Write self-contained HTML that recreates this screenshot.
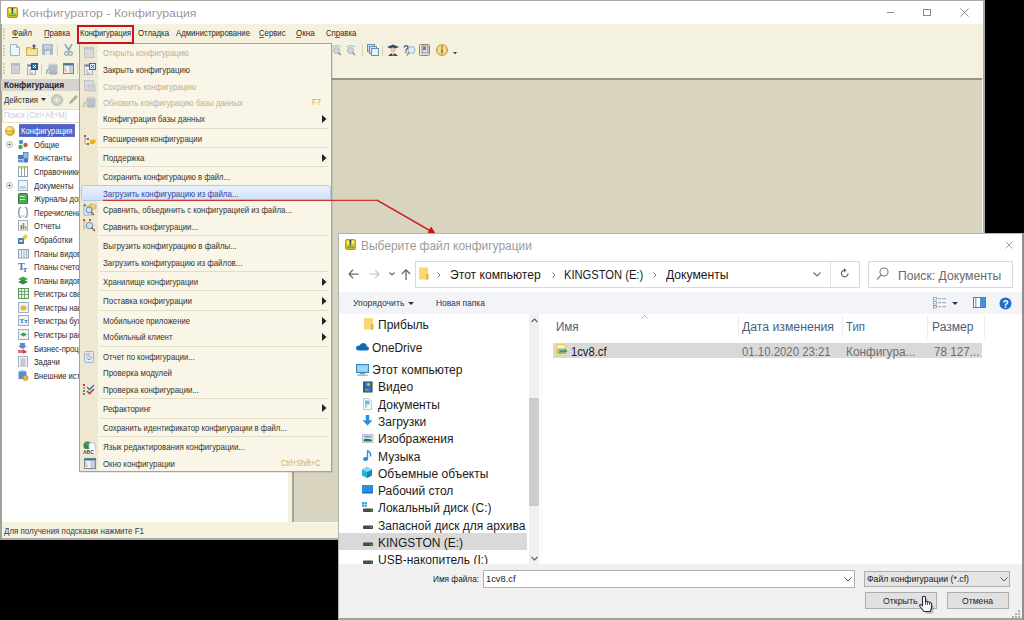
<!DOCTYPE html>
<html><head><meta charset="utf-8"><style>
html,body{margin:0;padding:0;}
body{width:1024px;height:620px;position:relative;overflow:hidden;background:#000;font-family:"Liberation Sans",sans-serif;}
#w{position:absolute;left:0;top:0;width:1024px;height:620px;}
.a{position:absolute;}
.t{position:absolute;white-space:nowrap;line-height:1;transform-origin:0 0;}
svg{position:absolute;}

#t0{transform:scaleX(1.0807)}
#t1{transform:scaleX(0.8477)}
#t2{transform:scaleX(0.8019)}
#t3{transform:scaleX(0.7920)}
#t4{transform:scaleX(0.8175)}
#t5{transform:scaleX(0.8089)}
#t6{transform:scaleX(0.8065)}
#t7{transform:scaleX(0.8342)}
#t8{transform:scaleX(0.8050)}
#t9{transform:scaleX(0.9189)}
#t10{transform:scaleX(0.8621)}
#t11{transform:scaleX(0.8295)}
#t12{transform:scaleX(0.8831)}
#t13{transform:scaleX(0.8526)}
#t32{transform:scaleX(0.8155)}
#t33{transform:scaleX(0.8308)}
#t34{transform:scaleX(0.8055)}
#t35{transform:scaleX(0.8160)}
#t36{transform:scaleX(0.8177)}
#t37{transform:scaleX(0.8132)}
#t38{transform:scaleX(0.8290)}
#t39{transform:scaleX(0.8035)}
#t40{transform:scaleX(0.8253)}
#t41{transform:scaleX(0.8144)}
#t42{transform:scaleX(0.8142)}
#t43{transform:scaleX(0.8190)}
#t44{transform:scaleX(0.8229)}
#t45{transform:scaleX(0.8069)}
#t46{transform:scaleX(0.8285)}
#t47{transform:scaleX(0.8049)}
#t48{transform:scaleX(0.8138)}
#t49{transform:scaleX(0.8096)}
#t50{transform:scaleX(0.8230)}
#t51{transform:scaleX(0.8212)}
#t52{transform:scaleX(0.8280)}
#t53{transform:scaleX(0.8063)}
#t54{transform:scaleX(0.8289)}
#t55{transform:scaleX(0.8160)}
#t56{transform:scaleX(0.8559)}
#t57{transform:scaleX(0.8056)}
#t58{transform:scaleX(0.9970)}
#t59{transform:scaleX(1.0108)}
#t60{transform:scaleX(0.9304)}
#t61{transform:scaleX(1.0120)}
#t62{transform:scaleX(1.0149)}
#t63{transform:scaleX(0.9090)}
#t64{transform:scaleX(0.8813)}
#t65{transform:scaleX(1.0007)}
#t66{transform:scaleX(0.9924)}
#t67{transform:scaleX(1.0085)}
#t79{transform:scaleX(0.9668)}
#t80{transform:scaleX(1.0192)}
#t81{transform:scaleX(0.9493)}
#t82{transform:scaleX(1.0036)}
#t83{transform:scaleX(0.9338)}
#t84{transform:scaleX(0.9495)}
#t85{transform:scaleX(0.9848)}
#t86{transform:scaleX(0.9718)}
#t87{transform:scaleX(0.8677)}
#t88{transform:scaleX(0.9798)}
#t89{transform:scaleX(0.9161)}
#t90{transform:scaleX(0.9246)}
#t91{transform:scaleX(0.9093)}</style></head><body><div id="w">
<div class="a" style="left:0px;top:0px;width:985px;height:540px;background:#a9a9a9;"></div>
<div class="a" style="left:1px;top:1px;width:982px;height:23px;background:#ffffff;"></div>
<div class="a" style="left:1px;top:24px;width:982px;height:514px;background:#f4f1de;"></div>
<div class="a" style="left:0px;top:24px;width:1.6px;height:516px;background:#a3a296;"></div>
<svg style="left:7px;top:7px" width="11" height="11" viewBox="0 0 11 11"><defs><linearGradient id="ig" x1="0" y1="0" x2="0" y2="1"><stop offset="0" stop-color="#fff8c0"/><stop offset="0.5" stop-color="#c8e050"/><stop offset="1" stop-color="#58a828"/></linearGradient></defs><rect x="0.5" y="0.5" width="10" height="10" rx="1.5" fill="#e0c020" stroke="#b89a10" stroke-width="1"/><rect x="1.8" y="1.8" width="7.4" height="7.4" fill="url(#ig)"/><rect x="4.6" y="1" width="1.6" height="3.5" fill="#303030"/><rect x="4.6" y="5.2" width="1.6" height="1.2" fill="#303030"/></svg>
<span id="t0" class="t" style="left:22px;top:7.75px;font-size:11.4px;color:#9a9a9a;">Конфигуратор - Конфигурация</span>
<div class="a" style="left:887px;top:12px;width:7px;height:1px;background:#8a8a8a;"></div>
<div class="a" style="left:923px;top:9px;width:8px;height:7px;box-sizing:border-box;border:1px solid #8a8a8a;"></div>
<svg style="left:960px;top:8px" width="9" height="9" viewBox="0 0 9 9"><path d="M0.5 0.5L8.5 8.5M8.5 0.5L0.5 8.5" stroke="#8a8a8a" stroke-width="1"/></svg>
<div class="a" style="left:3px;top:28px;width:2px;height:2px;background:#d2ccb0;"></div>
<div class="a" style="left:3px;top:31px;width:2px;height:2px;background:#d2ccb0;"></div>
<div class="a" style="left:3px;top:34px;width:2px;height:2px;background:#d2ccb0;"></div>
<div class="a" style="left:3px;top:37px;width:2px;height:2px;background:#d2ccb0;"></div>
<span id="t1" class="t" style="left:12px;top:28.07px;font-size:9.6px;color:#2a2a2a;">Файл</span>
<span id="t2" class="t" style="left:44px;top:28.07px;font-size:9.6px;color:#2a2a2a;">Правка</span>
<span id="t3" class="t" style="left:80px;top:28.07px;font-size:9.6px;color:#2a2a2a;">Конфигурация</span>
<span id="t4" class="t" style="left:138px;top:28.07px;font-size:9.6px;color:#2a2a2a;">Отладка</span>
<span id="t5" class="t" style="left:175.5px;top:28.07px;font-size:9.6px;color:#2a2a2a;">Администрирование</span>
<span id="t6" class="t" style="left:258.5px;top:28.07px;font-size:9.6px;color:#2a2a2a;">Сервис</span>
<span id="t7" class="t" style="left:295.7px;top:28.07px;font-size:9.6px;color:#2a2a2a;">Окна</span>
<span id="t8" class="t" style="left:325.6px;top:28.07px;font-size:9.6px;color:#2a2a2a;">Справка</span>
<div class="a" style="left:3px;top:45px;width:2px;height:2px;background:#d2ccb0;"></div>
<div class="a" style="left:3px;top:48px;width:2px;height:2px;background:#d2ccb0;"></div>
<div class="a" style="left:3px;top:51px;width:2px;height:2px;background:#d2ccb0;"></div>
<div class="a" style="left:3px;top:54px;width:2px;height:2px;background:#d2ccb0;"></div>
<div class="a" style="left:3px;top:63px;width:2px;height:2px;background:#d2ccb0;"></div>
<div class="a" style="left:3px;top:66px;width:2px;height:2px;background:#d2ccb0;"></div>
<div class="a" style="left:3px;top:69px;width:2px;height:2px;background:#d2ccb0;"></div>
<div class="a" style="left:3px;top:72px;width:2px;height:2px;background:#d2ccb0;"></div>
<div class="a" style="left:294px;top:79px;width:688px;height:443px;background:#d8d4c0;"></div>
<div class="a" style="left:292px;top:78px;width:690px;height:1.7px;background:#96958c;"></div>
<div class="a" style="left:982px;top:79px;width:1px;height:443px;background:#f6f5ee;"></div>
<div class="a" style="left:292px;top:79px;width:1.5px;height:443px;background:#a3a198;"></div>
<div class="a" style="left:292px;top:521.5px;width:691px;height:1px;background:#fbfaf2;"></div>
<div class="a" style="left:1px;top:79px;width:288px;height:12px;background:#d4d3cf;"></div>
<span id="t9" class="t" style="left:4px;top:80.58px;font-size:9px;color:#22222e;font-weight:700;">Конфигурация</span>
<span id="t10" class="t" style="left:4px;top:95.68px;font-size:9px;color:#2a2a2a;">Действия</span>
<svg style="left:41px;top:98px" width="5" height="4" viewBox="0 0 5 4"><path d="M0 0H5L2.5 3z" fill="#333"/></svg>
<svg style="left:51px;top:94px" width="12" height="12" viewBox="0 0 12 12"><circle cx="6" cy="6" r="5.5" fill="#c9cfc2" stroke="#b6bdb0"/><path d="M6 3V9M3 6H9" stroke="#e8ece4" stroke-width="1.4"/></svg>
<svg style="left:68px;top:94px" width="10" height="11" viewBox="0 0 10 11"><path d="M1 10L2 7L8 1L10 3L4 9z" fill="#aab4a4"/></svg>
<div class="a" style="left:2px;top:109px;width:286px;height:14px;background:#ffffff;box-sizing:border-box;border:1px solid #e3dfcc;border-radius:3px;"></div>
<span id="t11" class="t" style="left:3.5px;top:110.78px;font-size:9px;color:#c7cbd6;">Поиск (Ctrl+Alt+M)</span>
<div class="a" style="left:2px;top:123px;width:286px;height:399px;background:#ffffff;"></div>
<span id="t12" class="t" style="left:4px;top:526.88px;font-size:9px;color:#3a3a3a;">Для получения подсказки нажмите F1</span>
<svg style="left:10px;top:44px" width="10" height="12" viewBox="0 0 10 12"><path d="M0.5 0.5H6.5L9.5 3.5V11.5H0.5z" fill="#eef4fb" stroke="#9fb4cc"/><path d="M6.5 0.5V3.5H9.5" fill="#c8d8ea" stroke="#9fb4cc"/></svg>
<svg style="left:26px;top:44px" width="12" height="12" viewBox="0 0 12 12"><path d="M0.5 3.5H4.5L5.5 4.5H11.5V11.5H0.5z" fill="#f1d27a" stroke="#d4aa45"/><rect x="1" y="6" width="10" height="5" fill="#f7e39c"/><path d="M8 0L10.5 2.5H9V5H7V2.5H5.5z" fill="#4f6f8f"/></svg>
<svg style="left:42px;top:44px" width="11" height="11" viewBox="0 0 11 11"><rect x="0" y="0" width="11" height="11" rx="1" fill="#a9b7c6"/><rect x="2" y="1" width="7" height="4" fill="#c5d0da"/><rect x="3" y="7" width="5" height="4" fill="#dfe5ea"/></svg>
<div class="a" style="left:57px;top:45px;width:1px;height:11px;background:#d9d2b0;"></div>
<svg style="left:64px;top:44px" width="9" height="12" viewBox="0 0 9 12"><path d="M1 0L5 7M8 0L4 7" stroke="#8ea4bc" stroke-width="1.6"/><circle cx="2.5" cy="9.5" r="1.8" fill="none" stroke="#8ea4bc" stroke-width="1.2"/><circle cx="6.5" cy="9.5" r="1.8" fill="none" stroke="#8ea4bc" stroke-width="1.2"/></svg>
<svg style="left:11px;top:63px" width="9" height="11" viewBox="0 0 9 11"><rect x="0.5" y="0.5" width="8" height="10" fill="#d2d6da" stroke="#b7bdc4"/><rect x="1" y="1" width="7" height="1.5" fill="#b0b6bd"/><path d="M3 4V8H6" stroke="#e3b9a0" fill="none"/></svg>
<svg style="left:27px;top:63px" width="11" height="12" viewBox="0 0 11 12"><rect x="0.5" y="1.5" width="8" height="10" fill="#eef2f6" stroke="#a3b1c0"/><rect x="1" y="2" width="7" height="1.5" fill="#5b7fa6"/><path d="M3 6V10H6" stroke="#e09a70" fill="none"/><rect x="4.5" y="0.5" width="6" height="6" fill="#2f6aa0" stroke="#254f7a"/><path d="M6 2L9 5M9 2L6 5" stroke="#fff" stroke-width="1"/></svg>
<div class="a" style="left:41px;top:63px;width:1px;height:11px;background:#d9d2b0;"></div>
<svg style="left:46px;top:63px" width="12" height="12" viewBox="0 0 12 12"><ellipse cx="7" cy="2.5" rx="4.5" ry="2" fill="#c7cfd8"/><rect x="2.5" y="2.5" width="9" height="7.5" fill="#b4bec9"/><ellipse cx="7" cy="10" rx="4.5" ry="1.8" fill="#a9b3bf"/><path d="M1 11C0 8 2 6 3 6" stroke="#86a07a" fill="none" stroke-width="1.2"/></svg>
<svg style="left:63px;top:63px" width="11" height="11" viewBox="0 0 11 11"><rect x="0.5" y="0.5" width="10" height="10" fill="#eef2f6" stroke="#6d8aa8"/><rect x="0.5" y="0.5" width="10" height="2" fill="#4f7298"/><rect x="6" y="3" width="4" height="7" fill="#c8ced4"/><path d="M2 4V8H4" stroke="#e09a70" fill="none"/></svg>
<div class="a" style="left:77px;top:63px;width:1px;height:11px;background:#d9d2b0;"></div>
<svg style="left:332px;top:44px" width="10" height="12" viewBox="0 0 10 12"><path d="M1 3Q5 0 9 3" stroke="#9fb7cf" fill="none" stroke-width="1.2"/><circle cx="4.5" cy="6.5" r="3" fill="#cfd9e4" stroke="#a7b3c0"/><path d="M6.5 8.5L9 11" stroke="#a08d8a" stroke-width="1.5"/></svg>
<svg style="left:346px;top:44px" width="11" height="12" viewBox="0 0 11 12"><path d="M1 3Q5 0 9 3" stroke="#9fb7cf" fill="none" stroke-width="1.2"/><circle cx="4.5" cy="6.5" r="3" fill="#cfd9e4" stroke="#a7b3c0"/><path d="M6.5 8.5L9 11" stroke="#a08d8a" stroke-width="1.5"/></svg>
<div class="a" style="left:362px;top:45px;width:1px;height:11px;background:#d9d2b0;"></div>
<svg style="left:367px;top:44px" width="12" height="12" viewBox="0 0 12 12"><rect x="0.5" y="0.5" width="7" height="7" fill="#c9d8e8" stroke="#6a8fb5"/><rect x="2.5" y="2.5" width="7" height="7" fill="#d8e4f0" stroke="#6a8fb5"/><rect x="4.5" y="4.5" width="7" height="7" fill="#e8f0f8" stroke="#6a8fb5"/></svg>
<div class="a" style="left:382px;top:45px;width:1px;height:11px;background:#d9d2b0;"></div>
<svg style="left:387px;top:44px" width="12" height="12" viewBox="0 0 12 12"><path d="M0 3L6 0.5L12 3L6 5.5z" fill="#2d4d70"/><circle cx="6" cy="6" r="2.5" fill="#f0c8a0"/><path d="M1 12Q6 6 11 12z" fill="#2d4d70"/><path d="M4.5 9L6 12L7.5 9" fill="#f0d040"/></svg>
<svg style="left:403px;top:44px" width="13" height="12" viewBox="0 0 13 12"><text x="0" y="9" font-size="10" font-weight="700" fill="#3d5f86" font-family="Liberation Sans">?</text><circle cx="8.5" cy="6" r="3.5" fill="#dfeaf4" stroke="#9ab0c6"/><path d="M6 8.5L4 11.5" stroke="#b08c70" stroke-width="1.5"/></svg>
<svg style="left:419px;top:44px" width="11" height="12" viewBox="0 0 11 12"><rect x="0.5" y="0.5" width="10" height="11" rx="1" fill="#f7e7d0" stroke="#b07850"/><rect x="3" y="2" width="6" height="7" fill="#cfe0f0" stroke="#5a7fa8" stroke-width="0.8"/><rect x="4" y="3" width="3" height="3" fill="#e05060"/></svg>
<svg style="left:436px;top:44px" width="12" height="12" viewBox="0 0 12 12"><circle cx="6" cy="6" r="5.5" fill="#f2c46a" stroke="#d19a3a"/><circle cx="6" cy="6" r="4" fill="#f8dc98"/><rect x="5.2" y="2" width="1.6" height="1.6" fill="#5a8a30"/><rect x="5.2" y="4.5" width="1.6" height="5" fill="#5a8a30"/></svg>
<svg style="left:453px;top:52px" width="4" height="3" viewBox="0 0 4 3"><path d="M0 0H4L2 2.5z" fill="#444"/></svg>
<svg style="left:5px;top:126px" width="10" height="10" viewBox="0 0 10 10"><defs><radialGradient id="yg" cx="0.4" cy="0.35" r="0.7"><stop offset="0" stop-color="#fff6b0"/><stop offset="1" stop-color="#d9a800"/></radialGradient></defs><circle cx="5" cy="5" r="4.6" fill="url(#yg)" stroke="#c89600" stroke-width="0.6"/><rect x="1" y="4.4" width="8" height="1.2" fill="#b08400" opacity="0.6"/></svg>
<div class="a" style="left:19px;top:124.3px;width:56px;height:13.2px;background:#4c62c8;outline:1px dotted #6a7ad0;outline-offset:-1px;"></div>
<span id="t13" class="t" style="left:20.5px;top:127.28px;font-size:9px;color:#ffffff;">Конфигурация</span>
<span id="t14" class="t" style="left:33.5px;top:140.86px;font-size:9px;color:#262630;transform:scaleX(0.85);">Общие</span>
<svg style="left:18px;top:138.88000000000002px" width="11" height="11" viewBox="0 0 11 11"><circle cx="3" cy="3" r="2.2" fill="#4a8fd8"/><circle cx="2.5" cy="8" r="2.2" fill="#3cb043"/><circle cx="7.5" cy="6" r="2.2" fill="#b06a40"/></svg>
<span id="t15" class="t" style="left:33.5px;top:154.44px;font-size:9px;color:#262630;transform:scaleX(0.85);">Константы</span>
<svg style="left:18px;top:152.46px" width="11" height="11" viewBox="0 0 11 11"><rect x="0" y="3" width="5" height="4" fill="#4b7cb8"/><rect x="0" y="7.5" width="5" height="3" fill="#6a9ad0"/><rect x="5.5" y="0.5" width="4.5" height="6" fill="#8fb8e0" stroke="#4b7cb8" stroke-width="0.8"/><rect x="5.5" y="7" width="4.5" height="3.5" fill="#4b7cb8"/></svg>
<span id="t16" class="t" style="left:33.5px;top:168.02px;font-size:9px;color:#262630;transform:scaleX(0.85);">Справочники</span>
<svg style="left:18px;top:166.04000000000002px" width="11" height="11" viewBox="0 0 11 11"><rect x="0.5" y="0.5" width="9" height="10" fill="#fff" stroke="#8a9fb5"/><rect x="0.5" y="0.5" width="9" height="2" fill="#f0d060"/><path d="M3.5 1V10.5M6.5 1V10.5" stroke="#8a9fb5"/></svg>
<span id="t17" class="t" style="left:33.5px;top:181.60px;font-size:9px;color:#262630;transform:scaleX(0.85);">Документы</span>
<svg style="left:18px;top:179.62px" width="11" height="11" viewBox="0 0 11 11"><rect x="0.5" y="0.5" width="9" height="10" fill="#f2f5f8" stroke="#9fb0c0"/><rect x="2" y="6" width="6" height="3" fill="#c5d2de"/></svg>
<span id="t18" class="t" style="left:33.5px;top:195.18px;font-size:9px;color:#262630;transform:scaleX(0.85);">Журналы документов</span>
<svg style="left:18px;top:193.20000000000002px" width="11" height="11" viewBox="0 0 11 11"><rect x="0.5" y="0.5" width="9" height="10.5" rx="1" fill="#4caa4c" stroke="#2e7d32"/><rect x="2" y="3" width="5" height="1" fill="#d8f0d8"/><rect x="2" y="6" width="5" height="1" fill="#d8f0d8"/></svg>
<span id="t19" class="t" style="left:33.5px;top:208.76px;font-size:9px;color:#262630;transform:scaleX(0.85);">Перечисления</span>
<svg style="left:18px;top:206.78000000000003px" width="11" height="11" viewBox="0 0 11 11"><path d="M3 0.5Q1 0.5 1 2V4.5Q1 5.5 0 5.5Q1 5.5 1 6.5V9Q1 10.5 3 10.5M7 0.5Q9 0.5 9 2V4.5Q9 5.5 10 5.5Q9 5.5 9 6.5V9Q9 10.5 7 10.5" stroke="#506070" fill="none" stroke-width="0.9"/><rect x="3.5" y="8.5" width="1" height="1" fill="#506070"/><rect x="5.5" y="8.5" width="1" height="1" fill="#506070"/></svg>
<span id="t20" class="t" style="left:33.5px;top:222.34px;font-size:9px;color:#262630;transform:scaleX(0.85);">Отчеты</span>
<svg style="left:18px;top:220.36px" width="11" height="11" viewBox="0 0 11 11"><rect x="0.5" y="0.5" width="9" height="10.5" fill="#f4f7fa" stroke="#9fb0c0"/><rect x="2.5" y="5" width="1.6" height="4.5" fill="#e05050"/><rect x="4.7" y="3" width="1.6" height="6.5" fill="#4cb050"/><rect x="6.8" y="6" width="1.6" height="3.5" fill="#e09040"/></svg>
<span id="t21" class="t" style="left:33.5px;top:235.92px;font-size:9px;color:#262630;transform:scaleX(0.85);">Обработки</span>
<svg style="left:18px;top:233.94px" width="11" height="11" viewBox="0 0 11 11"><rect x="0" y="4" width="6" height="6" fill="#4b7cb8"/><path d="M4 3L7.5 0L10 2.5L7 6z" fill="#f0c840"/><rect x="1.5" y="6" width="3" height="2" fill="#cfe0f0"/></svg>
<span id="t22" class="t" style="left:33.5px;top:249.50px;font-size:9px;color:#262630;transform:scaleX(0.85);">Планы видов характеристик</span>
<svg style="left:18px;top:247.51999999999998px" width="11" height="11" viewBox="0 0 11 11"><rect x="0.5" y="1.5" width="10" height="8.5" fill="#e8eef4" stroke="#8aa0b8"/><path d="M3.5 2V10M6 2V10M8.5 2V10" stroke="#a8b8c8"/></svg>
<span id="t23" class="t" style="left:33.5px;top:263.08px;font-size:9px;color:#262630;transform:scaleX(0.85);">Планы счетов</span>
<svg style="left:18px;top:261.1px" width="11" height="11" viewBox="0 0 11 11"><text x="0" y="9" font-size="10" font-weight="700" fill="#3a72b8" font-family="Liberation Serif">T</text><text x="5" y="11" font-size="8" font-weight="700" fill="#3a72b8" font-family="Liberation Serif">т</text></svg>
<span id="t24" class="t" style="left:33.5px;top:276.66px;font-size:9px;color:#262630;transform:scaleX(0.85);">Планы видов расчета</span>
<svg style="left:18px;top:274.68px" width="11" height="11" viewBox="0 0 11 11"><path d="M0 4L5 1.5L10 4L5 6.5z" fill="#49a64a"/><path d="M0 7L5 4.5L10 7L5 9.5z" fill="#2f8a35"/></svg>
<span id="t25" class="t" style="left:33.5px;top:290.24px;font-size:9px;color:#262630;transform:scaleX(0.85);">Регистры сведений</span>
<svg style="left:18px;top:288.26px" width="11" height="11" viewBox="0 0 11 11"><rect x="0.5" y="0.5" width="10" height="10" fill="#e8f4e8" stroke="#5a9a5a"/><path d="M0.5 3.5H10.5M0.5 6.5H10.5M3.5 0.5V10.5M6.5 0.5V10.5" stroke="#5a9a5a" stroke-width="0.8"/></svg>
<span id="t26" class="t" style="left:33.5px;top:303.82px;font-size:9px;color:#262630;transform:scaleX(0.85);">Регистры накопления</span>
<svg style="left:18px;top:301.84000000000003px" width="11" height="11" viewBox="0 0 11 11"><rect x="0.5" y="0.5" width="10" height="10" fill="#eef3f8" stroke="#9fb0c0"/><ellipse cx="5.5" cy="6" rx="3" ry="2.5" fill="#e8b830"/></svg>
<span id="t27" class="t" style="left:33.5px;top:317.40px;font-size:9px;color:#262630;transform:scaleX(0.85);">Регистры бухгалтерии</span>
<svg style="left:18px;top:315.42px" width="11" height="11" viewBox="0 0 11 11"><rect x="0.5" y="0.5" width="10" height="10" fill="#eef3f8" stroke="#9fb0c0"/><text x="1.5" y="8" font-size="7" font-weight="700" fill="#3a72b8" font-family="Liberation Serif">Тт</text></svg>
<span id="t28" class="t" style="left:33.5px;top:330.98px;font-size:9px;color:#262630;transform:scaleX(0.85);">Регистры расчета</span>
<svg style="left:18px;top:329.0px" width="11" height="11" viewBox="0 0 11 11"><rect x="0.5" y="0.5" width="10" height="10" fill="#eef3f8" stroke="#9fb0c0"/><path d="M2 5.5L5.5 3.5L9 5.5L5.5 7.5z" fill="#3ca040"/></svg>
<span id="t29" class="t" style="left:33.5px;top:344.56px;font-size:9px;color:#262630;transform:scaleX(0.85);">Бизнес-процессы</span>
<svg style="left:18px;top:342.58000000000004px" width="11" height="11" viewBox="0 0 11 11"><path d="M2 0H7V3H9L4.5 6L0 3H2z" fill="#5a8ad0"/><path d="M5 6L9 9L5 11z" fill="#d84040"/><rect x="0" y="7" width="5" height="3" fill="#e07070"/></svg>
<span id="t30" class="t" style="left:33.5px;top:358.14px;font-size:9px;color:#262630;transform:scaleX(0.85);">Задачи</span>
<svg style="left:18px;top:356.16px" width="11" height="11" viewBox="0 0 11 11"><rect x="0.5" y="0.5" width="9" height="10.5" fill="#f4f7fa" stroke="#9fb0c0"/><path d="M2 3H8M2 5H8M2 7H8M2 9H8M4 2V10M6 2V10" stroke="#b0a0b8" stroke-width="0.7"/></svg>
<span id="t31" class="t" style="left:33.5px;top:371.72px;font-size:9px;color:#262630;transform:scaleX(0.85);">Внешние источники данных</span>
<svg style="left:18px;top:369.74px" width="11" height="11" viewBox="0 0 11 11"><ellipse cx="4.5" cy="2" rx="4" ry="1.8" fill="#8ab4e0"/><rect x="0.5" y="2" width="8" height="7" fill="#5a90c8"/><circle cx="7.5" cy="8" r="2.6" fill="#f0b840" stroke="#c08020" stroke-width="0.6"/></svg>
<svg style="left:6px;top:140.88000000000002px" width="7" height="7" viewBox="0 0 7 7"><circle cx="3.5" cy="3.5" r="3" fill="#fff" stroke="#a0a0a0" stroke-width="0.8"/><path d="M1.8 3.5H5.2M3.5 1.8V5.2" stroke="#707070" stroke-width="0.8"/></svg>
<svg style="left:6px;top:181.62px" width="7" height="7" viewBox="0 0 7 7"><circle cx="3.5" cy="3.5" r="3" fill="#fff" stroke="#a0a0a0" stroke-width="0.8"/><path d="M1.8 3.5H5.2M3.5 1.8V5.2" stroke="#707070" stroke-width="0.8"/></svg>
<div class="a" style="left:80px;top:44px;width:252.5px;height:428.5px;background:rgba(0,0,0,0.08);"></div>
<div class="a" style="left:79px;top:43px;width:253px;height:429px;background:#f9f6e7;box-sizing:border-box;border:1px solid #a4a39d;"></div>
<div class="a" style="left:80px;top:44px;width:17.5px;height:427px;background:#eee8d0;"></div>
<div class="a" style="left:100px;top:127.5px;width:228px;height:1px;background:#e2dcc6;"></div>
<div class="a" style="left:100px;top:146.5px;width:228px;height:1px;background:#e2dcc6;"></div>
<div class="a" style="left:100px;top:165.5px;width:228px;height:1px;background:#e2dcc6;"></div>
<div class="a" style="left:100px;top:234.5px;width:228px;height:1px;background:#e2dcc6;"></div>
<div class="a" style="left:100px;top:270.5px;width:228px;height:1px;background:#e2dcc6;"></div>
<div class="a" style="left:100px;top:289.5px;width:228px;height:1px;background:#e2dcc6;"></div>
<div class="a" style="left:100px;top:309.5px;width:228px;height:1px;background:#e2dcc6;"></div>
<div class="a" style="left:100px;top:345.5px;width:228px;height:1px;background:#e2dcc6;"></div>
<div class="a" style="left:100px;top:397.5px;width:228px;height:1px;background:#e2dcc6;"></div>
<div class="a" style="left:100px;top:417.5px;width:228px;height:1px;background:#e2dcc6;"></div>
<div class="a" style="left:100px;top:435.5px;width:228px;height:1px;background:#e2dcc6;"></div>
<div class="a" style="left:80.5px;top:185px;width:250px;height:15.5px;background:linear-gradient(#e9f1fc,#d0e1f8);box-sizing:border-box;border:1px solid #b3c9ec;border-radius:3px;"></div>
<span id="t32" class="t" style="left:103px;top:48.27px;font-size:9.6px;color:#bbb090;">Открыть конфигурацию</span>
<span id="t33" class="t" style="left:103px;top:64.97px;font-size:9.6px;color:#37342e;">Закрыть конфигурацию</span>
<span id="t34" class="t" style="left:103px;top:81.57px;font-size:9.6px;color:#bbb090;">Сохранить конфигурацию</span>
<span id="t35" class="t" style="left:103px;top:98.27px;font-size:9.6px;color:#bbb090;">Обновить конфигурацию базы данных</span>
<span id="t36" class="t" style="left:103px;top:114.27px;font-size:9.6px;color:#37342e;">Конфигурация базы данных</span>
<span id="t37" class="t" style="left:103px;top:133.77px;font-size:9.6px;color:#37342e;">Расширения конфигурации</span>
<span id="t38" class="t" style="left:103px;top:152.87px;font-size:9.6px;color:#37342e;">Поддержка</span>
<span id="t39" class="t" style="left:103px;top:172.27px;font-size:9.6px;color:#37342e;">Сохранить конфигурацию в файл...</span>
<span id="t40" class="t" style="left:103px;top:189.17px;font-size:9.6px;color:#34449a;">Загрузить конфигурацию из файла...</span>
<span id="t41" class="t" style="left:103px;top:205.27px;font-size:9.6px;color:#37342e;">Сравнить, объединить с конфигурацией из файла...</span>
<span id="t42" class="t" style="left:103px;top:222.07px;font-size:9.6px;color:#37342e;">Сравнить конфигурации...</span>
<span id="t43" class="t" style="left:103px;top:240.87px;font-size:9.6px;color:#37342e;">Выгрузить конфигурацию в файлы...</span>
<span id="t44" class="t" style="left:103px;top:257.57px;font-size:9.6px;color:#37342e;">Загрузить конфигурацию из файлов...</span>
<span id="t45" class="t" style="left:103px;top:277.27px;font-size:9.6px;color:#37342e;">Хранилище конфигурации</span>
<span id="t46" class="t" style="left:103px;top:296.27px;font-size:9.6px;color:#37342e;">Поставка конфигурации</span>
<span id="t47" class="t" style="left:103px;top:315.77px;font-size:9.6px;color:#37342e;">Мобильное приложение</span>
<span id="t48" class="t" style="left:103px;top:332.07px;font-size:9.6px;color:#37342e;">Мобильный клиент</span>
<span id="t49" class="t" style="left:103px;top:351.77px;font-size:9.6px;color:#37342e;">Отчет по конфигурации...</span>
<span id="t50" class="t" style="left:103px;top:368.17px;font-size:9.6px;color:#37342e;">Проверка модулей</span>
<span id="t51" class="t" style="left:103px;top:384.67px;font-size:9.6px;color:#37342e;">Проверка конфигурации...</span>
<span id="t52" class="t" style="left:103px;top:403.67px;font-size:9.6px;color:#37342e;">Рефакторинг</span>
<span id="t53" class="t" style="left:103px;top:422.97px;font-size:9.6px;color:#37342e;">Сохранить идентификатор конфигурации в файл...</span>
<span id="t54" class="t" style="left:103px;top:442.37px;font-size:9.6px;color:#37342e;">Язык редактирования конфигурации...</span>
<span id="t55" class="t" style="left:103px;top:459.27px;font-size:9.6px;color:#37342e;">Окно конфигурации</span>
<svg style="left:322px;top:115px" width="5" height="8" viewBox="0 0 5 8"><path d="M0 0L4.5 4L0 8z" fill="#222"/></svg>
<svg style="left:322px;top:153.6px" width="5" height="8" viewBox="0 0 5 8"><path d="M0 0L4.5 4L0 8z" fill="#222"/></svg>
<svg style="left:322px;top:278px" width="5" height="8" viewBox="0 0 5 8"><path d="M0 0L4.5 4L0 8z" fill="#222"/></svg>
<svg style="left:322px;top:297px" width="5" height="8" viewBox="0 0 5 8"><path d="M0 0L4.5 4L0 8z" fill="#222"/></svg>
<svg style="left:322px;top:316.5px" width="5" height="8" viewBox="0 0 5 8"><path d="M0 0L4.5 4L0 8z" fill="#222"/></svg>
<svg style="left:322px;top:332.8px" width="5" height="8" viewBox="0 0 5 8"><path d="M0 0L4.5 4L0 8z" fill="#222"/></svg>
<svg style="left:322px;top:404.4px" width="5" height="8" viewBox="0 0 5 8"><path d="M0 0L4.5 4L0 8z" fill="#222"/></svg>
<span id="t56" class="t" style="left:312px;top:98.38px;font-size:9px;color:#d4aa50;">F7</span>
<span id="t57" class="t" style="left:280.7px;top:459.18px;font-size:9px;color:#d4aa50;">Ctrl+Shift+C</span>
<svg style="left:84px;top:47px" width="11" height="11" viewBox="0 0 11 11"><rect x="0.5" y="0.5" width="9" height="10" fill="#d9dcdc" stroke="#c0c4c6"/><rect x="1" y="1" width="8" height="1.5" fill="#c2c6c8"/><path d="M3 4V8H6" stroke="#e5cfc0" fill="none"/></svg>
<svg style="left:84px;top:63px" width="12" height="12" viewBox="0 0 12 12"><rect x="0.5" y="1.5" width="8" height="10" fill="#eef2f6" stroke="#a3b1c0"/><rect x="1" y="2" width="7" height="1.5" fill="#5b7fa6"/><path d="M3 6V10H6" stroke="#e09a70" fill="none"/><rect x="5.5" y="0.5" width="6" height="6" fill="#dbe8f4" stroke="#2f6aa0"/><path d="M7 2L10 5M10 2L7 5" stroke="#2f6aa0" stroke-width="1"/></svg>
<svg style="left:84px;top:80px" width="12" height="12" viewBox="0 0 12 12"><rect x="0.5" y="0.5" width="9" height="10" fill="#d9dcdc" stroke="#c0c4c6"/><rect x="4" y="5" width="7" height="6" fill="#cfd3d5" stroke="#c0c4c6"/></svg>
<svg style="left:83px;top:96px" width="13" height="12" viewBox="0 0 13 12"><ellipse cx="8" cy="2.5" rx="4.5" ry="2" fill="#cdd3d8"/><rect x="3.5" y="2.5" width="9" height="7.5" fill="#bcc4cb"/><ellipse cx="8" cy="10" rx="4.5" ry="1.8" fill="#b2bac2"/><path d="M1 11C0 8 2 6 3.5 6" stroke="#a4b49a" fill="none" stroke-width="1.1"/></svg>
<svg style="left:84px;top:135px" width="13" height="11" viewBox="0 0 13 11"><path d="M1 0V9H4M1 4H4" stroke="#b09070" fill="none" stroke-width="0.8"/><rect x="0" y="0" width="2" height="2" fill="#d04040"/><rect x="3" y="3" width="2" height="2" fill="#4080d0"/><rect x="3" y="8" width="2" height="2" fill="#40a040"/><path d="M6 5H9L10 4L12 6L10 9H6z" fill="#e8b020"/></svg>
<svg style="left:83px;top:203px" width="14" height="13" viewBox="0 0 14 13"><rect x="1" y="3" width="8" height="9" fill="#e8eef4" stroke="#8aa0b8" stroke-width="0.8"/><path d="M7 1H10L11 2H13V6H7z" fill="#f0d070" stroke="#c8a040" stroke-width="0.6"/><circle cx="6" cy="7" r="3" fill="#cfe2f4" stroke="#5a7fa8" stroke-width="0.9"/><path d="M8 9L11 12" stroke="#8a6040" stroke-width="1.4"/><path d="M0 3L2 0L3 3" fill="#40a040"/></svg>
<svg style="left:83px;top:219px" width="14" height="13" viewBox="0 0 14 13"><path d="M1 1V11M1 3H3M1 8H3" stroke="#c0a080" stroke-width="0.7"/><rect x="0" y="0" width="2" height="2" fill="#e04040"/><rect x="6" y="0" width="2" height="2" fill="#e04040"/><circle cx="6.5" cy="6.5" r="3.2" fill="#cfe2f4" stroke="#5a7fa8" stroke-width="0.9"/><path d="M8.5 8.5L12 12" stroke="#8a6040" stroke-width="1.4"/></svg>
<svg style="left:84px;top:351px" width="11" height="12" viewBox="0 0 11 12"><rect x="0.5" y="0.5" width="9" height="11" rx="1" fill="#dfeaf4" stroke="#9ab4cc"/><path d="M2 3H6M2 5H7" stroke="#e08060" stroke-width="0.8"/><path d="M3 7L5 9L8 6" stroke="#40a0d0" fill="none" stroke-width="1"/></svg>
<svg style="left:83px;top:384px" width="13" height="11" viewBox="0 0 13 11"><rect x="0" y="0" width="2" height="2" fill="#d04040"/><rect x="0" y="3" width="2" height="2" fill="#d0a040"/><rect x="0" y="6" width="2" height="2" fill="#40a040"/><rect x="0" y="9" width="2" height="2" fill="#4080d0"/><path d="M4 3L6.5 5.5L11 1" stroke="#3a80d0" fill="none" stroke-width="1.6"/><path d="M4 7L6.5 9.5L11 5" stroke="#d03838" fill="none" stroke-width="1.6"/></svg>
<svg style="left:83px;top:441px" width="13" height="13" viewBox="0 0 13 13"><circle cx="4.5" cy="4.5" r="4" fill="#3a8a3a"/><path d="M2 3Q4 2 5 4Q6 6 8 5" stroke="#4a90d8" fill="none" stroke-width="1.5"/><rect x="6" y="2" width="6" height="8" fill="#fff" stroke="#9ab0c6" stroke-width="0.7"/><rect x="0" y="8" width="12" height="5" fill="#fff"/><text x="0" y="12.5" font-size="5" font-weight="700" fill="#1a3a6a" font-family="Liberation Sans">ABC</text></svg>
<svg style="left:84px;top:458px" width="12" height="11" viewBox="0 0 12 11"><rect x="0.5" y="0.5" width="11" height="10" fill="#eef2f6" stroke="#6d8aa8"/><rect x="0.5" y="0.5" width="11" height="2" fill="#4f7298"/><rect x="6.5" y="3" width="4.5" height="7" fill="#c8ced4"/><path d="M2 4V8H4" stroke="#e09a70" fill="none"/></svg>
<div class="a" style="left:77px;top:25px;width:57px;height:19px;box-sizing:border-box;border:2px solid #cc1020;"></div>
<svg style="left:0px;top:0px" width="1024" height="620" viewBox="0 0 1024 620"><path d="M103 200.3H377.6" stroke="#cc3428" stroke-width="1.25"/><path d="M377 200.1L430 230.6" stroke="#cc1c1c" stroke-width="1.6"/><path d="M435.8,233.7 L427.6,232.8 L431.1,226.6 z" fill="#cc1414"/></svg>
<div class="a" style="left:338px;top:233px;width:686px;height:387px;background:#a2a29c;"></div>
<div class="a" style="left:1022px;top:233px;width:2px;height:387px;background:#909184;"></div>
<div class="a" style="left:338px;top:233px;width:684px;height:385px;background:#b4b4ae;"></div>
<div class="a" style="left:339px;top:234px;width:683px;height:384px;background:#ffffff;"></div>
<svg style="left:345px;top:239px" width="11" height="11" viewBox="0 0 11 11"><defs><linearGradient id="ig2" x1="0" y1="0" x2="0" y2="1"><stop offset="0" stop-color="#fff8c0"/><stop offset="0.5" stop-color="#c8e050"/><stop offset="1" stop-color="#58a828"/></linearGradient></defs><rect x="0.5" y="0.5" width="10" height="10" rx="1.5" fill="#e0c020" stroke="#b89a10" stroke-width="1"/><rect x="1.8" y="1.8" width="7.4" height="7.4" fill="url(#ig2)"/><rect x="4.6" y="1" width="1.6" height="3.5" fill="#303030"/><rect x="4.6" y="5.2" width="1.6" height="1.2" fill="#303030"/></svg>
<span id="t58" class="t" style="left:361px;top:239.54px;font-size:12px;color:#9b9b9b;">Выберите файл конфигурации</span>
<svg style="left:1005px;top:241px" width="8" height="8" viewBox="0 0 8 8"><path d="M0.5 0.5L7.5 7.5M7.5 0.5L0.5 7.5" stroke="#a0a0a0" stroke-width="1"/></svg>
<svg style="left:348px;top:269px" width="11" height="10" viewBox="0 0 11 10"><path d="M5 0.8L1 5L5 9.2M1 5H10.5" stroke="#6e6e6e" fill="none" stroke-width="1.25"/></svg>
<svg style="left:369px;top:269px" width="11" height="10" viewBox="0 0 11 10"><path d="M6 0.8L10 5L6 9.2M0.5 5H10" stroke="#c4c4c4" fill="none" stroke-width="1.2"/></svg>
<svg style="left:389px;top:272px" width="6" height="4" viewBox="0 0 6 4"><path d="M0.5 0.5L3 3L5.5 0.5" stroke="#6a6a6a" fill="none" stroke-width="1.1"/></svg>
<svg style="left:401px;top:269px" width="10" height="11" viewBox="0 0 10 11"><path d="M0.8 5L5 0.8L9.2 5M5 1V11" stroke="#6a6a6a" fill="none" stroke-width="1.3"/></svg>
<div class="a" style="left:415px;top:261px;width:445px;height:27px;background:#ffffff;box-sizing:border-box;border:1px solid #d9d9d9;"></div>
<div class="a" style="left:829.5px;top:262px;width:1px;height:25px;background:#e3e3e3;"></div>
<svg style="left:419px;top:267px" width="10" height="13" viewBox="0 0 10 13"><rect x="0" y="0.5" width="9" height="12" rx="0.8" fill="#f8d775"/><rect x="7" y="7" width="2.5" height="5.5" fill="#e8b83a"/></svg>
<svg style="left:437px;top:272px" width="4" height="6" viewBox="0 0 4 6"><path d="M0.5 0.5L3 3L0.5 5.5" stroke="#777" fill="none" stroke-width="1"/></svg>
<span id="t59" class="t" style="left:450.3px;top:268.74px;font-size:12px;color:#1a1a1a;">Этот компьютер</span>
<svg style="left:552px;top:272px" width="4" height="6" viewBox="0 0 4 6"><path d="M0.5 0.5L3 3L0.5 5.5" stroke="#777" fill="none" stroke-width="1"/></svg>
<span id="t60" class="t" style="left:564.4px;top:268.74px;font-size:12px;color:#1a1a1a;">KINGSTON (E:)</span>
<svg style="left:653px;top:272px" width="4" height="6" viewBox="0 0 4 6"><path d="M0.5 0.5L3 3L0.5 5.5" stroke="#777" fill="none" stroke-width="1"/></svg>
<span id="t61" class="t" style="left:666px;top:268.74px;font-size:12px;color:#1a1a1a;">Документы</span>
<svg style="left:813px;top:272px" width="8" height="5" viewBox="0 0 8 5"><path d="M0.5 0.5L4 4L7.5 0.5" stroke="#6a6a6a" fill="none" stroke-width="1.1"/></svg>
<svg style="left:840px;top:268px" width="10" height="11" viewBox="0 0 10 11"><path d="M8 5.5A3.3 3.3 0 1 1 5 2.2" stroke="#666" fill="none" stroke-width="1.2"/><path d="M4 0L6.5 2.2L4 4.4z" fill="#666"/></svg>
<div class="a" style="left:868px;top:261px;width:145px;height:27px;background:#ffffff;box-sizing:border-box;border:1px solid #d9d9d9;"></div>
<svg style="left:876px;top:267px" width="13" height="14" viewBox="0 0 13 14"><circle cx="8" cy="5" r="4" fill="none" stroke="#777" stroke-width="1.1"/><path d="M5.2 7.8L1 12.5" stroke="#a0805a" stroke-width="1.3"/></svg>
<span id="t62" class="t" style="left:897.5px;top:269.94px;font-size:12px;color:#6a6a6a;">Поиск: Документы</span>
<div class="a" style="left:339px;top:292px;width:683px;height:22px;background:#f2f4f8;"></div>
<span id="t63" class="t" style="left:352.6px;top:298.46px;font-size:9.5px;color:#1e3553;">Упорядочить</span>
<svg style="left:408px;top:302px" width="6" height="4" viewBox="0 0 6 4"><path d="M0 0H6L3 3z" fill="#1e3553"/></svg>
<span id="t64" class="t" style="left:436px;top:298.46px;font-size:9.5px;color:#1e3553;">Новая папка</span>
<svg style="left:933px;top:297px" width="14" height="12" viewBox="0 0 14 12"><rect x="0.5" y="0.5" width="3" height="2.5" fill="#fff" stroke="#8a9ab0" stroke-width="0.8"/><rect x="0.5" y="4.5" width="3" height="2.5" fill="#fff" stroke="#8a9ab0" stroke-width="0.8"/><rect x="0.5" y="8.5" width="3" height="2.5" fill="#fce0e0" stroke="#b08a8a" stroke-width="0.8"/><path d="M5 1.7H8M9 1.7H13M5 5.7H8M9 5.7H13M5 9.7H8M9 9.7H13" stroke="#8a9ab0" stroke-width="0.9"/></svg>
<svg style="left:952px;top:302px" width="6" height="4" viewBox="0 0 6 4"><path d="M0 0H6L3 3z" fill="#1e3553"/></svg>
<svg style="left:973px;top:297px" width="13" height="11" viewBox="0 0 13 11"><rect x="0.5" y="0.5" width="12" height="10" fill="#fff" stroke="#6a7a90"/><rect x="7" y="1" width="5" height="9" fill="#4a90d8"/><rect x="2" y="1" width="1.5" height="9" fill="#a0b0c8"/></svg>
<svg style="left:999px;top:297px" width="13" height="13" viewBox="0 0 13 13"><circle cx="6.5" cy="6.5" r="6" fill="#1e6ec8"/><text x="3.6" y="10.5" font-size="10" font-weight="700" fill="#fff" font-family="Liberation Sans">?</text></svg>
<div class="a" style="left:339px;top:533px;width:188px;height:16.5px;background:#d9d9d9;"></div>
<svg style="left:364px;top:318px" width="10" height="12" viewBox="0 0 10 12"><rect x="0" y="0" width="9" height="11.5" rx="0.8" fill="#f8d775"/><rect x="7" y="6" width="2.5" height="5.5" fill="#e8b83a"/></svg>
<span id="t65" class="t" style="left:378px;top:318.74px;font-size:12px;color:#1a1a1a;">Прибыль</span>
<svg style="left:356px;top:342px" width="13" height="9" viewBox="0 0 13 9"><path d="M3 8.5H11Q13 8.5 13 6.5Q13 4.5 11 4.5Q10.5 1 7 1Q4.5 1 3.5 3.5Q0 3.5 0 6Q0 8.5 3 8.5z" fill="#0f6cbd"/></svg>
<span id="t66" class="t" style="left:372px;top:341.84px;font-size:12px;color:#1a1a1a;">OneDrive</span>
<svg style="left:356px;top:364px" width="13" height="12" viewBox="0 0 13 12"><rect x="0.5" y="0.5" width="12" height="8" fill="#6cc4f0" stroke="#3a8ac0"/><rect x="1.5" y="1.5" width="10" height="6" fill="#9ad8f8"/><rect x="4" y="9" width="5" height="1.5" fill="#8aa0b0"/><rect x="1" y="10.5" width="11" height="1.5" fill="#b0bcc8"/></svg>
<span id="t67" class="t" style="left:371.5px;top:364.44px;font-size:12px;color:#1a1a1a;">Этот компьютер</span>
<span id="t68" class="t" style="left:378px;top:381.34px;font-size:12px;color:#1a1a1a;">Видео</span>
<svg style="left:362px;top:380.6px" width="12" height="12" viewBox="0 0 12 12"><rect x="1" y="0.5" width="9.5" height="11" fill="#404040"/><rect x="2.6" y="1.3" width="6.3" height="4.3" fill="#2f7fd8"/><rect x="2.6" y="6.4" width="6.3" height="4.3" fill="#2f7fd8"/><circle cx="6.5" cy="3.5" r="1.5" fill="#e0c030"/><rect x="3" y="8" width="3" height="2" fill="#40b040"/><path d="M1.6 1.5V10.5M9.9 1.5V10.5" stroke="#909090" stroke-width="0.6" stroke-dasharray="1 1"/></svg>
<span id="t69" class="t" style="left:378px;top:398.64px;font-size:12px;color:#1a1a1a;">Документы</span>
<svg style="left:362px;top:397.90000000000003px" width="12" height="12" viewBox="0 0 12 12"><path d="M1.5 0.5H7L9.5 3V11.5H1.5z" fill="#f8f8f8" stroke="#b8b8b8" stroke-width="0.8"/><rect x="3" y="2.5" width="4.5" height="4" fill="#6ab4ec"/><rect x="3" y="7.5" width="2" height="2" fill="#9ac0a0"/></svg>
<span id="t70" class="t" style="left:378px;top:415.94px;font-size:12px;color:#1a1a1a;">Загрузки</span>
<svg style="left:362px;top:415.20000000000005px" width="12" height="12" viewBox="0 0 12 12"><path d="M3.8 0H7.2V5.2H10.5L5.5 10.5L0.5 5.2H3.8z" fill="#2a8ee0"/></svg>
<span id="t71" class="t" style="left:378px;top:433.24px;font-size:12px;color:#1a1a1a;">Изображения</span>
<svg style="left:362px;top:432.5px" width="12" height="12" viewBox="0 0 12 12"><rect x="0.5" y="1.5" width="10.5" height="8" fill="#e8e8e8" stroke="#c4c4c4"/><defs><linearGradient id="sky" x1="0" y1="0" x2="0" y2="1"><stop offset="0" stop-color="#3a8ee8"/><stop offset="0.5" stop-color="#d8ecf8"/><stop offset="1" stop-color="#6a9a70"/></linearGradient></defs><rect x="1.8" y="2.8" width="8" height="5.5" fill="url(#sky)"/><path d="M1.8 6.5Q5 4.8 9.8 7V8.3H1.8z" fill="#3a6a40"/></svg>
<span id="t72" class="t" style="left:378px;top:450.54px;font-size:12px;color:#1a1a1a;">Музыка</span>
<svg style="left:362px;top:449.8px" width="12" height="12" viewBox="0 0 12 12"><path d="M5.5 0.5V8.5" stroke="#2a8ee0" stroke-width="1.4"/><path d="M5.5 0.5Q9.5 3 8.5 6.5" stroke="#2a8ee0" stroke-width="1.4" fill="none"/><ellipse cx="3.6" cy="9" rx="2.6" ry="2" fill="#2a8ee0"/></svg>
<span id="t73" class="t" style="left:378px;top:467.84px;font-size:12px;color:#1a1a1a;">Объемные объекты</span>
<svg style="left:362px;top:467.1px" width="12" height="12" viewBox="0 0 12 12"><path d="M5 0L10 2.5V8.5L5 11L0 8.5V2.5z" fill="#2ab0d0"/><path d="M5 5L10 2.5V8.5L5 11z" fill="#1a88b0"/><path d="M0 2.5L5 0L10 2.5L5 5z" fill="#80dcf0"/></svg>
<span id="t74" class="t" style="left:378px;top:485.14px;font-size:12px;color:#1a1a1a;">Рабочий стол</span>
<svg style="left:362px;top:484.40000000000003px" width="12" height="12" viewBox="0 0 12 12"><rect x="0" y="1" width="11" height="8" fill="#2a8ee0"/><rect x="0" y="8" width="11" height="1.5" fill="#1a6ab8"/></svg>
<span id="t75" class="t" style="left:378px;top:502.44px;font-size:12px;color:#1a1a1a;">Локальный диск (C:)</span>
<svg style="left:362px;top:501.70000000000005px" width="12" height="12" viewBox="0 0 12 12"><rect x="0" y="0" width="2.2" height="2.2" fill="#30a0e8"/><rect x="2.6" y="0" width="2.2" height="2.2" fill="#30a0e8"/><rect x="0" y="2.6" width="2.2" height="2.2" fill="#30a0e8"/><rect x="2.6" y="2.6" width="2.2" height="2.2" fill="#30a0e8"/><rect x="1" y="6.5" width="10" height="3.5" rx="0.8" fill="#4a4a4a"/><rect x="8.5" y="8" width="1.5" height="1" fill="#3c3"/></svg>
<span id="t76" class="t" style="left:378px;top:519.74px;font-size:12px;color:#1a1a1a;">Запасной диск для архива</span>
<svg style="left:362px;top:519.0px" width="12" height="12" viewBox="0 0 12 12"><rect x="1" y="6.5" width="10" height="3.5" rx="0.8" fill="#4a4a4a"/><rect x="8.5" y="8" width="1.5" height="1" fill="#3c3"/></svg>
<span id="t77" class="t" style="left:378px;top:537.04px;font-size:12px;color:#1a1a1a;">KINGSTON (E:)</span>
<svg style="left:362px;top:536.3000000000001px" width="12" height="12" viewBox="0 0 12 12"><rect x="1" y="6.5" width="10" height="3.5" rx="0.8" fill="#4a4a4a"/><rect x="8.5" y="8" width="1.5" height="1" fill="#3c3"/></svg>
<span id="t78" class="t" style="left:378px;top:554.34px;font-size:12px;color:#1a1a1a;">USB-накопитель (I:)</span>
<svg style="left:362px;top:553.6px" width="12" height="12" viewBox="0 0 12 12"><rect x="1" y="6.5" width="10" height="3.5" rx="0.8" fill="#4a4a4a"/><rect x="8.5" y="8" width="1.5" height="1" fill="#3c3"/></svg>
<div class="a" style="left:339px;top:564px;width:683px;height:54px;background:#f0f0f0;"></div>
<div class="a" style="left:529px;top:314px;width:10px;height:250px;background:#f0f0f0;"></div>
<div class="a" style="left:529px;top:398px;width:10px;height:107.5px;background:#cdcdcd;"></div>
<svg style="left:531px;top:318px" width="7" height="5" viewBox="0 0 7 5"><path d="M0.5 4L3.5 1L6.5 4" stroke="#606060" fill="none" stroke-width="1.1"/></svg>
<svg style="left:531px;top:556px" width="7" height="5" viewBox="0 0 7 5"><path d="M0.5 1L3.5 4L6.5 1" stroke="#606060" fill="none" stroke-width="1.1"/></svg>
<div class="a" style="left:541px;top:314px;width:1px;height:250px;background:#f4f4f4;"></div>
<span id="t79" class="t" style="left:555.6px;top:321.34px;font-size:12px;color:#4c607a;">Имя</span>
<svg style="left:641px;top:315px" width="7" height="4" viewBox="0 0 7 4"><path d="M0.5 3.5L3.5 0.5L6.5 3.5" stroke="#a0a0a0" fill="none" stroke-width="0.9"/></svg>
<div class="a" style="left:738px;top:316px;width:1px;height:22px;background:#ececec;"></div>
<div class="a" style="left:842px;top:316px;width:1px;height:22px;background:#ececec;"></div>
<div class="a" style="left:927px;top:316px;width:1px;height:22px;background:#ececec;"></div>
<div class="a" style="left:984px;top:316px;width:1px;height:22px;background:#ececec;"></div>
<span id="t80" class="t" style="left:742.3px;top:321.34px;font-size:12px;color:#4c607a;">Дата изменения</span>
<span id="t81" class="t" style="left:845.6px;top:321.34px;font-size:12px;color:#4c607a;">Тип</span>
<span id="t82" class="t" style="left:931.6px;top:321.34px;font-size:12px;color:#4c607a;">Размер</span>
<div class="a" style="left:552.5px;top:342.5px;width:429.5px;height:15.8px;background:#d9d9d9;"></div>
<svg style="left:556px;top:344px" width="12" height="12" viewBox="0 0 12 12"><rect x="0.8" y="0.8" width="8.4" height="10.4" rx="1.2" fill="#fffbe0" stroke="#f2d630" stroke-width="1.5"/><ellipse cx="5" cy="5" rx="3.5" ry="1.5" fill="#c8ccd0"/><rect x="1.5" y="5" width="7" height="3.5" fill="#a8b0b8"/><ellipse cx="5" cy="8.5" rx="3.5" ry="1.5" fill="#98a0a8"/><path d="M4 6.5H8.5V4.5L11.5 7L8.5 9.5V8H4z" fill="#3aa040"/></svg>
<span id="t83" class="t" style="left:571px;top:345.54px;font-size:12px;color:#1a1a1a;">1cv8.cf</span>
<span id="t84" class="t" style="left:742.3px;top:345.54px;font-size:12px;color:#6d6d6d;">01.10.2020 23:21</span>
<span id="t85" class="t" style="left:845.6px;top:345.54px;font-size:12px;color:#6d6d6d;">Конфигура...</span>
<span id="t86" class="t" style="left:934.4px;top:345.54px;font-size:12px;color:#6d6d6d;">78 127...</span>
<span id="t87" class="t" style="left:433px;top:574.06px;font-size:9.5px;color:#1a1a1a;">Имя файла:</span>
<div class="a" style="left:483px;top:570px;width:372px;height:17.5px;background:#ffffff;box-sizing:border-box;border:1px solid #b0b0b0;"></div>
<span id="t88" class="t" style="left:486px;top:574.06px;font-size:9.5px;color:#1a1a1a;">1cv8.cf</span>
<svg style="left:844px;top:577px" width="8" height="5" viewBox="0 0 8 5"><path d="M0.5 0.5L4 4L7.5 0.5" stroke="#555" fill="none" stroke-width="1"/></svg>
<div class="a" style="left:864px;top:570.5px;width:145.5px;height:16.3px;background:#e5e5e5;box-sizing:border-box;border:1px solid #adadad;"></div>
<span id="t89" class="t" style="left:867px;top:574.06px;font-size:9.5px;color:#1a1a1a;">Файл конфигурации (*.cf)</span>
<svg style="left:999.5px;top:577px" width="8" height="5" viewBox="0 0 8 5"><path d="M0.5 0.5L4 4L7.5 0.5" stroke="#555" fill="none" stroke-width="1"/></svg>
<div class="a" style="left:864.5px;top:592px;width:72.5px;height:17px;background:#e1e1e1;box-sizing:border-box;border:1px solid #adadad;"></div>
<span id="t90" class="t" style="left:883px;top:596.16px;font-size:9.5px;color:#1a1a1a;">Открыть</span>
<div class="a" style="left:947px;top:592.3px;width:62px;height:16.3px;background:#e1e1e1;box-sizing:border-box;border:1px solid #adadad;"></div>
<span id="t91" class="t" style="left:962px;top:595.86px;font-size:9.5px;color:#1a1a1a;">Отмена</span>
<svg style="left:917px;top:594px" width="20" height="24" viewBox="0 0 20 24"><path transform="translate(2.2,2.2)" d="M5.5 3Q7 1.5 8.5 3V8Q9.5 7 10.5 8Q11.5 7.3 12.5 8.3Q14 8 14.5 9.5V13Q14.5 15.5 13 17.5H7L3 12.5Q2 11 3.5 10.5Q4.5 10.5 5.5 12z" fill="rgba(0,0,0,0.22)"/><path d="M5.5 3Q7 1.5 8.5 3V8Q9.5 7 10.5 8Q11.5 7.3 12.5 8.3Q14 8 14.5 9.5V13Q14.5 15.5 13 17.5H7L3 12.5Q2 11 3.5 10.5Q4.5 10.5 5.5 12z" fill="#fff" stroke="#2a2d3a" stroke-width="1.1" stroke-linejoin="round"/><path d="M8.5 8V11M10.5 8V11M12.5 8.5V11" stroke="#2a2d3a" stroke-width="0.8"/></svg>
<div class="a" style="left:1018px;top:610px;width:1.5px;height:1.5px;background:#b0b0b0;"></div>
<div class="a" style="left:1015px;top:613px;width:1.5px;height:1.5px;background:#b0b0b0;"></div>
<div class="a" style="left:1018px;top:613px;width:1.5px;height:1.5px;background:#b0b0b0;"></div>
<div class="a" style="left:1012px;top:616px;width:1.5px;height:1.5px;background:#b0b0b0;"></div>
<div class="a" style="left:1015px;top:616px;width:1.5px;height:1.5px;background:#b0b0b0;"></div>
<div class="a" style="left:1018px;top:616px;width:1.5px;height:1.5px;background:#b0b0b0;"></div>
<div class="a" style="left:12.3px;top:37px;width:5.5px;height:1px;background:#6a665a;"></div>
<div class="a" style="left:44px;top:37px;width:5px;height:1px;background:#6a665a;"></div>
<div class="a" style="left:258.6px;top:37px;width:5px;height:1px;background:#6a665a;"></div>
<div class="a" style="left:296px;top:37px;width:5px;height:1px;background:#6a665a;"></div>
<div class="a" style="left:335px;top:37px;width:4.5px;height:1px;background:#6a665a;"></div>
</div></body></html>
